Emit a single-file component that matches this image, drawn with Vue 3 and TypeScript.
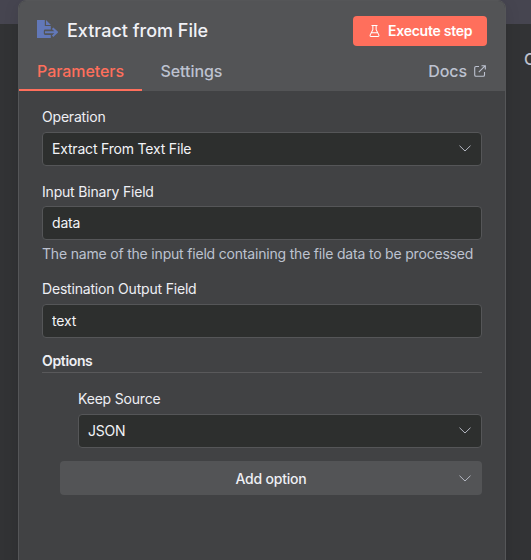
<script setup lang="ts">
import { ref } from 'vue'

const tabs = ['Parameters', 'Settings']
const activeTab = ref('Parameters')
const inputField = ref('data')
const outputField = ref('text')
</script>

<template>
  <div class="page">
    <div class="canvas-strip"></div>
    <span class="behind">O</span>
    <section class="panel">
      <header class="header">
        <div class="title-row">
          <svg class="node-icon" viewBox="0 0 21 18">
            <path d="M0 0h7.800v6h6v3.500H8.200q-1.400 0-1.400 1.400v2.600q0 1.400 1.400 1.400h5.600V18H0z" />
            <path d="M9 0l4.900 5H9z" />
            <path class="arrow" d="M8 12.200H20M15.600 8.200l4.300 4-4.300 4" />
          </svg>
          <h1>Extract from File</h1>
          <button class="execute" type="button">
            <svg class="flask" viewBox="0 0 12 14">
              <path d="M2.700 1h6.600M4.200 1v4.500L1.300 11.200Q.7 12.900 2.300 13h7.400q1.600-.1 1-1.800L7.800 5.500V1M2.800 9h6.400" />
            </svg>
            <span>Execute step</span>
          </button>
        </div>
        <nav class="tabs">
          <a v-for="tab in tabs" :key="tab" class="tab" :class="{ active: tab === activeTab }" @click="activeTab = tab">{{ tab }}</a>
          <a class="docs">
            <span>Docs</span>
            <svg viewBox="0 0 12 12">
              <path d="M5 1.500H2Q.7 1.500.7 2.800V10Q.7 11.300 2 11.300h7.200q1.300 0 1.300-1.300V7M7.500.7h3.800v3.800M11.300.7L4.800 7.200" />
            </svg>
          </a>
        </nav>
      </header>
      <div class="body">
        <div class="field">
          <label>Operation</label>
          <div class="control">
            <span>Extract From Text File</span>
            <svg class="chevron" viewBox="0 0 12 7"><path d="M.5.7L6 6l5.500-5.300" /></svg>
          </div>
        </div>
        <div class="field binary">
          <label>Input Binary Field</label>
          <input v-model="inputField" class="control" type="text" />
          <p class="hint">The name of the input field containing the file data to be processed</p>
        </div>
        <div class="field destination">
          <label>Destination Output Field</label>
          <input v-model="outputField" class="control" type="text" />
        </div>
        <h2>Options</h2>
        <div class="field keep">
          <label>Keep Source</label>
          <div class="control">
            <span>JSON</span>
            <svg class="chevron" viewBox="0 0 12 7"><path d="M.5.7L6 6l5.500-5.300" /></svg>
          </div>
        </div>
        <button class="add" type="button">
          <span>Add option</span>
          <svg class="chevron" viewBox="0 0 12 7"><path d="M.5.7L6 6l5.500-5.300" /></svg>
        </button>
      </div>
    </section>
  </div>
</template>

<style>
body {
  margin: 0;
  background: #323335;
}
</style>

<style scoped>
* {
  box-sizing: border-box;
}
.page {
  position: relative;
  width: 531px;
  height: 560px;
  padding-left: 18px;
  overflow: hidden;
  background: #323335;
  font-family: Inter, sans-serif;
}
.canvas-strip {
  position: absolute;
  inset: 0 0 auto;
  height: 24px;
  background: #464550;
}
.behind {
  position: absolute;
  left: 524px;
  top: 49px;
  font-size: 16px;
  line-height: 20px;
  font-weight: 500;
  color: #bec0cd;
}
.panel {
  position: relative;
  width: 488px;
  height: 580px;
  border: 1px solid #555658;
  border-radius: 8px;
  background: #414244;
  box-shadow: 0 4px 16px rgba(0, 0, 0, 0.1);
}
.header {
  height: 90px;
  border-radius: 7px 7px 0 0;
  background: #535456;
}
.title-row {
  display: flex;
  align-items: center;
  height: 60px;
  padding: 0 18px;
}
.node-icon {
  width: 21px;
  height: 18px;
  margin-top: -4px;
  fill: #6278b8;
}
.node-icon .arrow {
  fill: none;
  stroke: #6278b8;
  stroke-width: 2.1;
}
h1 {
  margin: 0 auto 0 9px;
  font-size: 18px;
  line-height: 24px;
  font-weight: 500;
  color: #f0f1f6;
}
button {
  display: flex;
  align-items: center;
  border: 0;
  font-family: inherit;
}
.execute {
  width: 134px;
  height: 30px;
  padding: 0 0 1px 16px;
  gap: 8px;
  border-radius: 4px;
  background: #ff6f5c;
  color: #fff;
  font-size: 14px;
  font-weight: 600;
  letter-spacing: -0.25px;
  white-space: nowrap;
}
.flask {
  width: 11px;
  height: 14px;
  fill: none;
  stroke: #fff;
  stroke-width: 1.1;
}
.tabs {
  display: flex;
  height: 30px;
  line-height: 20px;
  font-size: 16px;
  font-weight: 500;
  letter-spacing: -0.06px;
  color: #bdc2d0;
}
.tab {
  height: 30px;
  padding: 0 18px;
}
.active {
  color: #ff6f5c;
  border-bottom: 2px solid #ff6f5c;
}
.tab + .tab {
  padding-left: 18.5px;
}
.docs {
  display: flex;
  gap: 7px;
  margin-left: auto;
  padding-right: 19px;
}
.docs svg {
  width: 12px;
  height: 12px;
  margin-top: 4px;
  fill: none;
  stroke: #bdc2d0;
  stroke-width: 1.1;
}
.body {
  padding: 18px 23px;
  font-size: 14px;
  letter-spacing: -0.19px;
  color: #eeeff4;
}
label {
  display: block;
  height: 23px;
  line-height: 16px;
}
.control {
  display: flex;
  align-items: center;
  justify-content: space-between;
  width: 100%;
  height: 34px;
  padding: 0 10px 1px 9px;
  border: 1px solid #555658;
  border-radius: 4px;
  outline: 0;
  background: #2d2f2e;
  color: #f2f3f7;
  font: inherit;
  letter-spacing: inherit;
}
.chevron {
  width: 12px;
  height: 7px;
  fill: none;
  stroke: #b4b7c2;
  stroke-width: 1;
}
.binary {
  margin-top: 17px;
}
.binary label {
  line-height: 17px;
}
.hint {
  margin: 5px 0 0;
  line-height: 18px;
  white-space: nowrap;
  color: #bdc2d0;
}
.destination {
  margin-top: 18px;
}
h2 {
  height: 21px;
  margin: 14px 0 0;
  border-bottom: 1px solid #59595b;
  font-size: 14px;
  line-height: 18px;
  font-weight: 600;
  letter-spacing: -0.35px;
}
.keep {
  margin: 18px 0 0 36px;
}
.add {
  position: relative;
  justify-content: center;
  width: 422px;
  height: 34px;
  margin: 13px 0 0 18px;
  border-radius: 4px;
  background: #535456;
  color: #eeeff4;
  font-size: 14px;
  font-weight: 500;
  letter-spacing: -0.22px;
}
.add .chevron {
  position: absolute;
  right: 11px;
}
</style>
